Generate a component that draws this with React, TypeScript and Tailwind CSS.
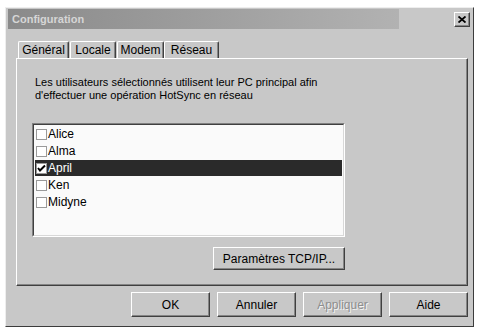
import React from "react";

const font = { fontFamily: '"Liberation Sans", Arial, sans-serif' };

function Btn({ label, w, h, disabled }: { label: string; w: string; h: string; disabled?: boolean }) {
  return (
    <div
      className={`${w} ${h} flex items-center justify-center border border-t-white border-l-white border-r-[#404040] border-b-[#404040] shadow-[inset_-1px_-1px_0_#858585] text-[12px] ${
        disabled ? "text-[#8e8e8e] [text-shadow:1px_1px_0_#f4f4f4]" : "text-black"
      }`}
    >
      {label}
    </div>
  );
}

function Row({ name, checked, selected }: { name: string; checked?: boolean; selected?: boolean }) {
  return (
    <div className="h-[17px] flex items-start">
      <div className={`h-[16px] flex items-center pl-[1px] ${selected ? "bg-[#2a2a2a] w-full" : ""}`}>
        <div className="w-[11px] h-[11px] bg-white border border-[#9a9a9a] flex items-center justify-center">
          {checked && (
            <svg width="9" height="9" viewBox="0 0 9 9">
              <path d="M1 4 L3 6.5 L8 1.5" stroke="#000" strokeWidth="2" fill="none" />
            </svg>
          )}
        </div>
        <span className={`ml-[1px] text-[12px] leading-[16px] ${selected ? "text-white" : "text-black"}`}>{name}</span>
      </div>
    </div>
  );
}

function Tab({ label, w, selected }: { label: string; w: string; selected?: boolean }) {
  if (selected) {
    return (
      <div
        className={`${w} h-[22px] -mb-[1px] relative z-10 bg-[#c8c8c8] border-l border-t border-white border-r border-r-[#404040] shadow-[inset_-1px_0_0_#858585] rounded-t-[2px] flex items-start justify-center pt-[2px] text-[12px] text-black`}
      >
        {label}
      </div>
    );
  }
  return (
    <div
      className={`${w} h-[17px] border-l border-t border-white border-r border-r-[#404040] shadow-[inset_-1px_0_0_#858585] rounded-t-[2px] flex items-center justify-center text-[12px] text-black`}
    >
      {label}
    </div>
  );
}

export default function App() {
  return (
    <div className="w-[484px] h-[332px] bg-white pl-[5px] pt-[7px]" style={font}>
      <div className="w-[469px] h-[320px] bg-[#c8c8c8] border border-t-[#eeeeee] border-l-[#eeeeee] border-r-[#3c3c3c] border-b-[#3c3c3c] px-[2px] pt-[1px] flex flex-col">
        {/* title bar */}
        <div className="h-[20px] flex items-center">
          <div className="w-[391px] h-[20px] bg-[linear-gradient(to_right,#8a8a8a,#b2b2b2)] flex items-center pl-[4px]">
            <span className="text-[11px] font-bold text-[#d6d6d6]">Configuration</span>
          </div>
          <div className="flex-1" />
          <div className="w-[16px] h-[15px] mr-[1px] border border-t-white border-l-white border-r-[#404040] border-b-[#404040] shadow-[inset_-1px_-1px_0_#858585] flex items-center justify-center">
            <svg width="8" height="7" viewBox="0 0 8 7">
              <path d="M0.5 0.5 L7.5 6.5 M7.5 0.5 L0.5 6.5" stroke="#000" strokeWidth="1.8" />
            </svg>
          </div>
        </div>

        {/* tabs */}
        <div className="mt-[8px] ml-[8px] h-[21px] flex items-end">
          <div className="w-[2px]" />
          <Tab label="Général" w="w-[51px]" />
          <div className="w-[1px]" />
          <Tab label="Locale" w="w-[46px]" />
          <div className="w-[1px]" />
          <Tab label="Modem" w="w-[47px]" />
          <Tab label="Réseau" w="w-[55px]" />
        </div>

        {/* panel */}
        <div className="ml-[8px] w-[452px] h-[228px] border border-t-white border-l-white border-r-[#404040] border-b-[#404040] shadow-[inset_-1px_-1px_0_#858585] pt-[17px] pl-[15px] flex flex-col">
          <div className="ml-[3px] text-[11px] leading-[13px] text-black">
            <div>Les utilisateurs sélectionnés utilisent leur PC principal afin</div>
            <div>d'effectuer une opération HotSync en réseau</div>
          </div>
          <div className="mt-[21px] w-[313px] h-[114px] bg-[#fafafa] border border-t-[#808080] border-l-[#808080] border-r-white border-b-white">
            <div className="w-full h-full border border-t-[#404040] border-l-[#404040] border-r-[#d8d8d8] border-b-[#d8d8d8] pt-[1px] pl-[1px] pr-[1px]">
              <Row name="Alice" />
              <Row name="Alma" />
              <Row name="April" checked selected />
              <Row name="Ken" />
              <Row name="Midyne" />
            </div>
          </div>
          <div className="mt-[10px] w-[313px] flex justify-end">
            <Btn label="Paramètres TCP/IP..." w="w-[132px]" h="h-[23px]" />
          </div>
        </div>

        {/* buttons */}
        <div className="mt-[6px] ml-[8px] w-[452px] flex justify-end gap-[7px]">
          <Btn label="OK" w="w-[79px]" h="h-[25px]" />
          <Btn label="Annuler" w="w-[79px]" h="h-[25px]" />
          <Btn label="Appliquer" w="w-[79px]" h="h-[25px]" disabled />
          <Btn label="Aide" w="w-[79px]" h="h-[25px]" />
        </div>
      </div>
    </div>
  );
}
